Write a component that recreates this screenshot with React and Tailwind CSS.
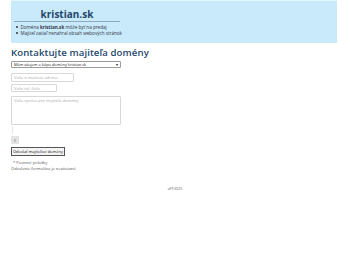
const Bullet = ({ children }) => (
  <div className="flex items-center h-[6px]">
    <span className="w-[1.5px] h-[1.5px] rounded-full bg-[#334] mr-[3px]" />
    <span>{children}</span>
  </div>
);

const App = () => {
  return (
    <div className="w-[350px] h-[262px] bg-white font-['Open_Sans',sans-serif] text-[#333] text-[4px] leading-[5px]">
      <div className="ml-[11px] w-[326px] h-[43px] bg-[#c8eafb] border-t border-[#e3f5fe] pt-[6px]">
        <div className="w-[106px] ml-[3px] border-b border-[#8fa9bf] text-center text-[10px] leading-[14px] font-bold text-[#24476b]">
          kristian.sk
        </div>
        <div className="mt-[2px] ml-[5px] text-[4.6px] leading-[6px] text-[#334]">
          <Bullet>
            Doména <b>kristian.sk</b> môže byť na predaj
          </Bullet>
          <Bullet>Majiteľ zatiaľ nenahral obsah webových stránok</Bullet>
        </div>
      </div>

      <div className="ml-[11px] mt-[3px] flex flex-col items-start">
        <h1 className="text-[9.6px] leading-[13px] font-semibold text-[#24476b] tracking-[0.1px]">
          Kontaktujte majiteľa domény
        </h1>
        <div className="mt-[2px] w-[110px] h-[7px] border border-[#9a9a9a] rounded-[1px] flex items-center justify-between px-[2px] text-[3.9px] text-[#222]">
          <span>Mám záujem o kúpu domény kristian.sk</span>
          <span className="text-[4px] leading-none">▾</span>
        </div>
        <div className="mt-[5px] w-[63px] h-[9px] border border-[#d8d8d8] rounded-[1px] px-[2px] flex items-center text-[4.2px] text-[#aaa]">
          Vaša e-mailová adresa
        </div>
        <div className="mt-[2px] w-[46px] h-[8px] border border-[#d8d8d8] rounded-[1px] px-[2px] flex items-center text-[4.2px] text-[#aaa]">
          Vaše tel. číslo
        </div>
        <div className="mt-[4px] w-[110px] h-[29px] border border-[#d8d8d8] rounded-[1px] px-[2px] pt-[1px] text-[4.2px] text-[#aaa]">
          Vaša správa pre majiteľa domény
        </div>
        <div className="mt-[1px] ml-[1px] w-px h-[8px] bg-[#e6e6e6]" />
        <div className="mt-[2px] w-[8px] h-[8px] bg-[#e4e4e4] flex items-center justify-center text-[4px] text-[#333]">
          €
        </div>
        <div className="mt-[3px] h-[9px] px-[1px] border border-[#555] bg-[#f4f4f4] flex items-center justify-center whitespace-nowrap text-[4px] text-[#111]">
          Odoslať majiteľovi domény
        </div>
        <div className="mt-[4px] ml-[2px] text-[4.1px] leading-[5px] text-[#555]">* Povinné položky</div>
        <div className="mt-[1px] text-[4.1px] leading-[5px] text-[#555]">Odoslanie formulára je nezáväzné</div>
      </div>

      <div className="mt-[15px] text-center text-[3.8px] text-[#666]">aFF2025</div>
    </div>
  );
};

export default App;
